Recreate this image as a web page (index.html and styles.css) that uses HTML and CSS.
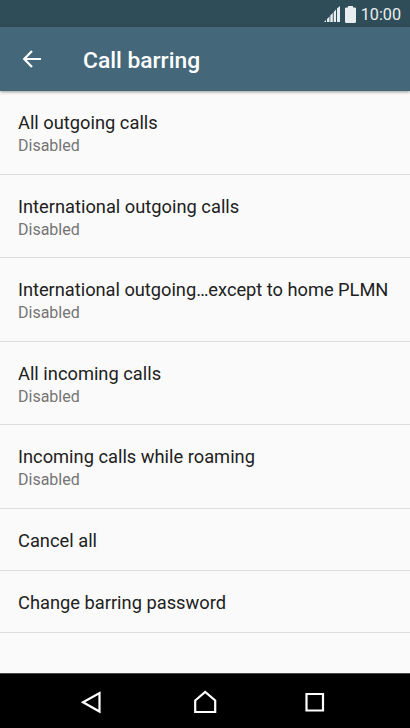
FILE: index.html
```html
<!DOCTYPE html>
<html lang="en">
<head>
<meta charset="utf-8">
<title>Call barring</title>
<link rel="stylesheet" href="styles.css">
</head>
<body>
<div class="screen">
  <div class="status">
    <svg class="signal" width="16" height="16" viewBox="0 0 16 16"><path d="M0 16l2-2v2zM3 13l2.500-2.500V16H3zM6.300 9.500L8.800 7v9H6.300zM9.700 6l2.300-2.500V16H9.700zM13 2.500L16 0v16h-3z"/></svg>
    <svg class="battery" width="11" height="17" viewBox="0 0 11 17"><path d="M3 0h5v1.500h2.200l.8.8V16l-.8 1H.8L0 16V2.300l.8-.8H3z"/></svg>
    <span class="time">10:00</span>
  </div>
  <header class="bar">
    <svg class="back" width="20" height="18" viewBox="0 0 20 18"><path d="M19 9H2.500M10 1L2.200 9l7.800 8"/></svg>
    <h1>Call barring</h1>
  </header>
  <main class="list">
    <div class="row"><div class="title">All outgoing calls</div><div class="sub">Disabled</div></div>
    <div class="row"><div class="title">International outgoing calls</div><div class="sub">Disabled</div></div>
    <div class="row"><div class="title plmn">International outgoing…except to home PLMN</div><div class="sub">Disabled</div></div>
    <div class="row"><div class="title">All incoming calls</div><div class="sub">Disabled</div></div>
    <div class="row"><div class="title">Incoming calls while roaming</div><div class="sub">Disabled</div></div>
    <div class="row single"><div class="title">Cancel all</div></div>
    <div class="row single"><div class="title">Change barring password</div></div>
  </main>
  <nav class="nav">
    <svg width="24" height="24" viewBox="0 0 24 24"><path d="M20.500 3v18.500L4 12.200z"/></svg>
    <svg width="24" height="24" viewBox="0 0 24 24"><path d="M2.200 10.500L12.200 2l10 8.500V22h-20z"/></svg>
    <svg width="24" height="24" viewBox="0 0 24 24"><path d="M3.500 4H20v16.500H3.500z"/></svg>
  </nav>
</div>
</body>
</html>
```
FILE: styles.css
```css
* { box-sizing: border-box; }
body { margin: 0; font-family: Roboto, sans-serif; }
.screen { width: 410px; height: 728px; display: flex; flex-direction: column; background: #fafafa; overflow: hidden; }
.status { height: 27px; flex: none; background: #2f4d59; display: flex; align-items: center; justify-content: flex-end; padding: 2px 9px 0 0; color: #e8edef; }
.status svg { fill: #e8edef; }
.signal { margin: 0 5px 1px 0; }
.battery { margin: 0 5px 1px 0; }
.time { font-size: 16.2px; line-height: 20px; }
.bar { height: 64px; flex: none; background: #446879; display: flex; align-items: center; padding: 0 0 0 22px; color: #fff; box-shadow: 0 1px 3px rgba(0,0,0,.4); }
.back { fill: none; stroke: #fff; stroke-width: 2.2; margin-right: 41px; }
h1 { margin: 0; padding-top: 4px; font-size: 22.8px; line-height: 28px; font-weight: 500; }
.list { flex: 1; }
.row { height: 83.6px; padding: 19px 18px 0; border-bottom: 1px solid #dedede; white-space: nowrap; }
.single { height: 62px; }
.title { font-size: 18.3px; line-height: 25px; color: #212121; }
.plmn { letter-spacing: -0.03px; }
.sub { font-size: 16px; line-height: 21px; color: #757575; }
.nav { height: 55px; flex: none; background: #000; border-top: 1px solid #484848; display: flex; justify-content: center; align-items: center; gap: 86px; padding-top: 2px; }
.nav svg { fill: none; stroke: #fff; stroke-width: 2.2; }
.nav svg:first-child { margin-left: -4px; margin-right: 4px; }
```
